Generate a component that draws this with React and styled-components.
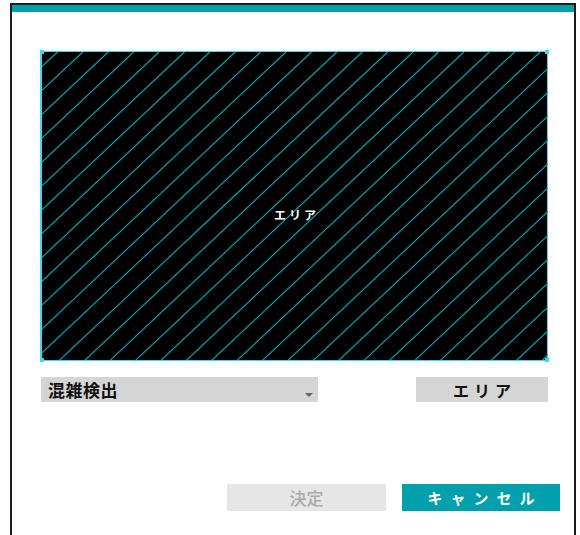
import React from 'react'
import styled, { createGlobalStyle } from 'styled-components'

const colours = {
  teal: '#02a0ac',
  frame: '#1c1c1c',
  hatch: '#00b0c6',
  edge: '#3fd8f4',
  grey: '#d5d5d5',
  paleGrey: '#e6e6e6',
}

const GlobalStyle = createGlobalStyle`
  html, body {
    margin: 0;
    padding: 0;
    background: #fff;
    overflow: hidden;
  }
  body {
    font-family: 'Noto Sans CJK JP', 'Noto Sans', sans-serif;
  }
`

const Frame = styled.div`
  box-sizing: border-box;
  margin: 3px 0 0 10px;
  width: 566px;
  height: 540px;
  border: 2px solid ${colours.frame};
  border-bottom: none;
  display: flex;
  flex-direction: column;
`

const TitleBar = styled.div`
  height: 7px;
  background: ${colours.teal};
`

const Body = styled.div`
  padding: 39px 26px 0 28px;
  display: flex;
  flex-direction: column;
`

const Canvas = styled.div`
  position: relative;
  width: 508px;
  height: 310px;
  background: #000;
  box-sizing: border-box;
  border: 1px solid ${colours.edge};
  border-left-width: 2px;

  svg {
    position: absolute;
    inset: 0;
  }
`

const Handle = styled.span`
  position: absolute;
  width: 4px;
  height: 4px;
  background: ${colours.edge};
  ${({ $top }) => ($top ? 'top: -2px;' : 'bottom: -2px;')}
  ${({ $left }) => ($left ? 'left: -2px;' : 'right: -2px;')}
`

const AreaLabel = styled.span`
  position: absolute;
  left: 0;
  right: 0;
  top: 156px;
  text-align: center;
  color: #fff;
  font-size: 12px;
  font-weight: 700;
  letter-spacing: 3px;
  line-height: 14px;
  padding-left: 4px;
`

const Controls = styled.div`
  margin-top: 16px;
  display: flex;
  justify-content: space-between;
  align-items: center;
`

const Select = styled.div`
  position: relative;
  margin-left: 1px;
  width: 277px;
  height: 25px;
  box-sizing: border-box;
  padding-left: 7px;
  background: ${colours.grey};
  color: #111;
  font-size: 17px;
  font-weight: 700;
  line-height: 25px;
  letter-spacing: 0.5px;

  &::after {
    content: '';
    position: absolute;
    right: 5px;
    top: 16px;
    border-left: 4px solid transparent;
    border-right: 4px solid transparent;
    border-top: 4px solid #666;
  }
`

const Button = styled.div`
  box-sizing: border-box;
  width: ${({ $width }) => $width}px;
  height: ${({ $height }) => $height}px;
  display: flex;
  align-items: center;
  justify-content: center;
  background: ${({ $bg }) => $bg};
  color: ${({ $fg }) => $fg};
  font-size: ${({ $size }) => $size}px;
  font-weight: ${({ $weight }) => $weight};
  letter-spacing: ${({ $spacing }) => $spacing}px;
  padding-left: ${({ $spacing }) => $spacing}px;
`

const Footer = styled.div`
  margin-top: 82px;
  padding-right: 14px;
  display: flex;
  justify-content: flex-end;
  gap: 16px;
`

const Hatch = () => {
  const lines = []
  for (let x = -340; x < 520; x += 25.4) {
    lines.push(
      <line
        key={x}
        x1={x}
        y1={310}
        x2={x + 330}
        y2={0}
        stroke={colours.hatch}
        strokeWidth="1.1"
      />
    )
  }
  return (
    <svg width="506" height="308" viewBox="0 0 506 308">
      {lines}
    </svg>
  )
}

const App = () => {
  return (
    <>
      <GlobalStyle />
      <Frame>
        <TitleBar />
        <Body>
          <Canvas>
            <Hatch />
            <Handle $top $left />
            <Handle $top />
            <Handle $left />
            <Handle />
            <AreaLabel>エリア</AreaLabel>
          </Canvas>
          <Controls>
            <Select>混雑検出</Select>
            <Button
              $width={132}
              $height={25}
              $bg={colours.grey}
              $fg="#111"
              $size={16}
              $weight={700}
              $spacing={5}
            >
              エリア
            </Button>
          </Controls>
        </Body>
        <Footer>
          <Button
            $width={159}
            $height={27}
            $bg={colours.paleGrey}
            $fg="#aaa"
            $size={17}
            $weight={500}
            $spacing={0}
          >
            決定
          </Button>
          <Button
            $width={158}
            $height={27}
            $bg={colours.teal}
            $fg="#fff"
            $size={15}
            $weight={700}
            $spacing={8}
          >
            キャンセル
          </Button>
        </Footer>
      </Frame>
    </>
  )
}

export default App
